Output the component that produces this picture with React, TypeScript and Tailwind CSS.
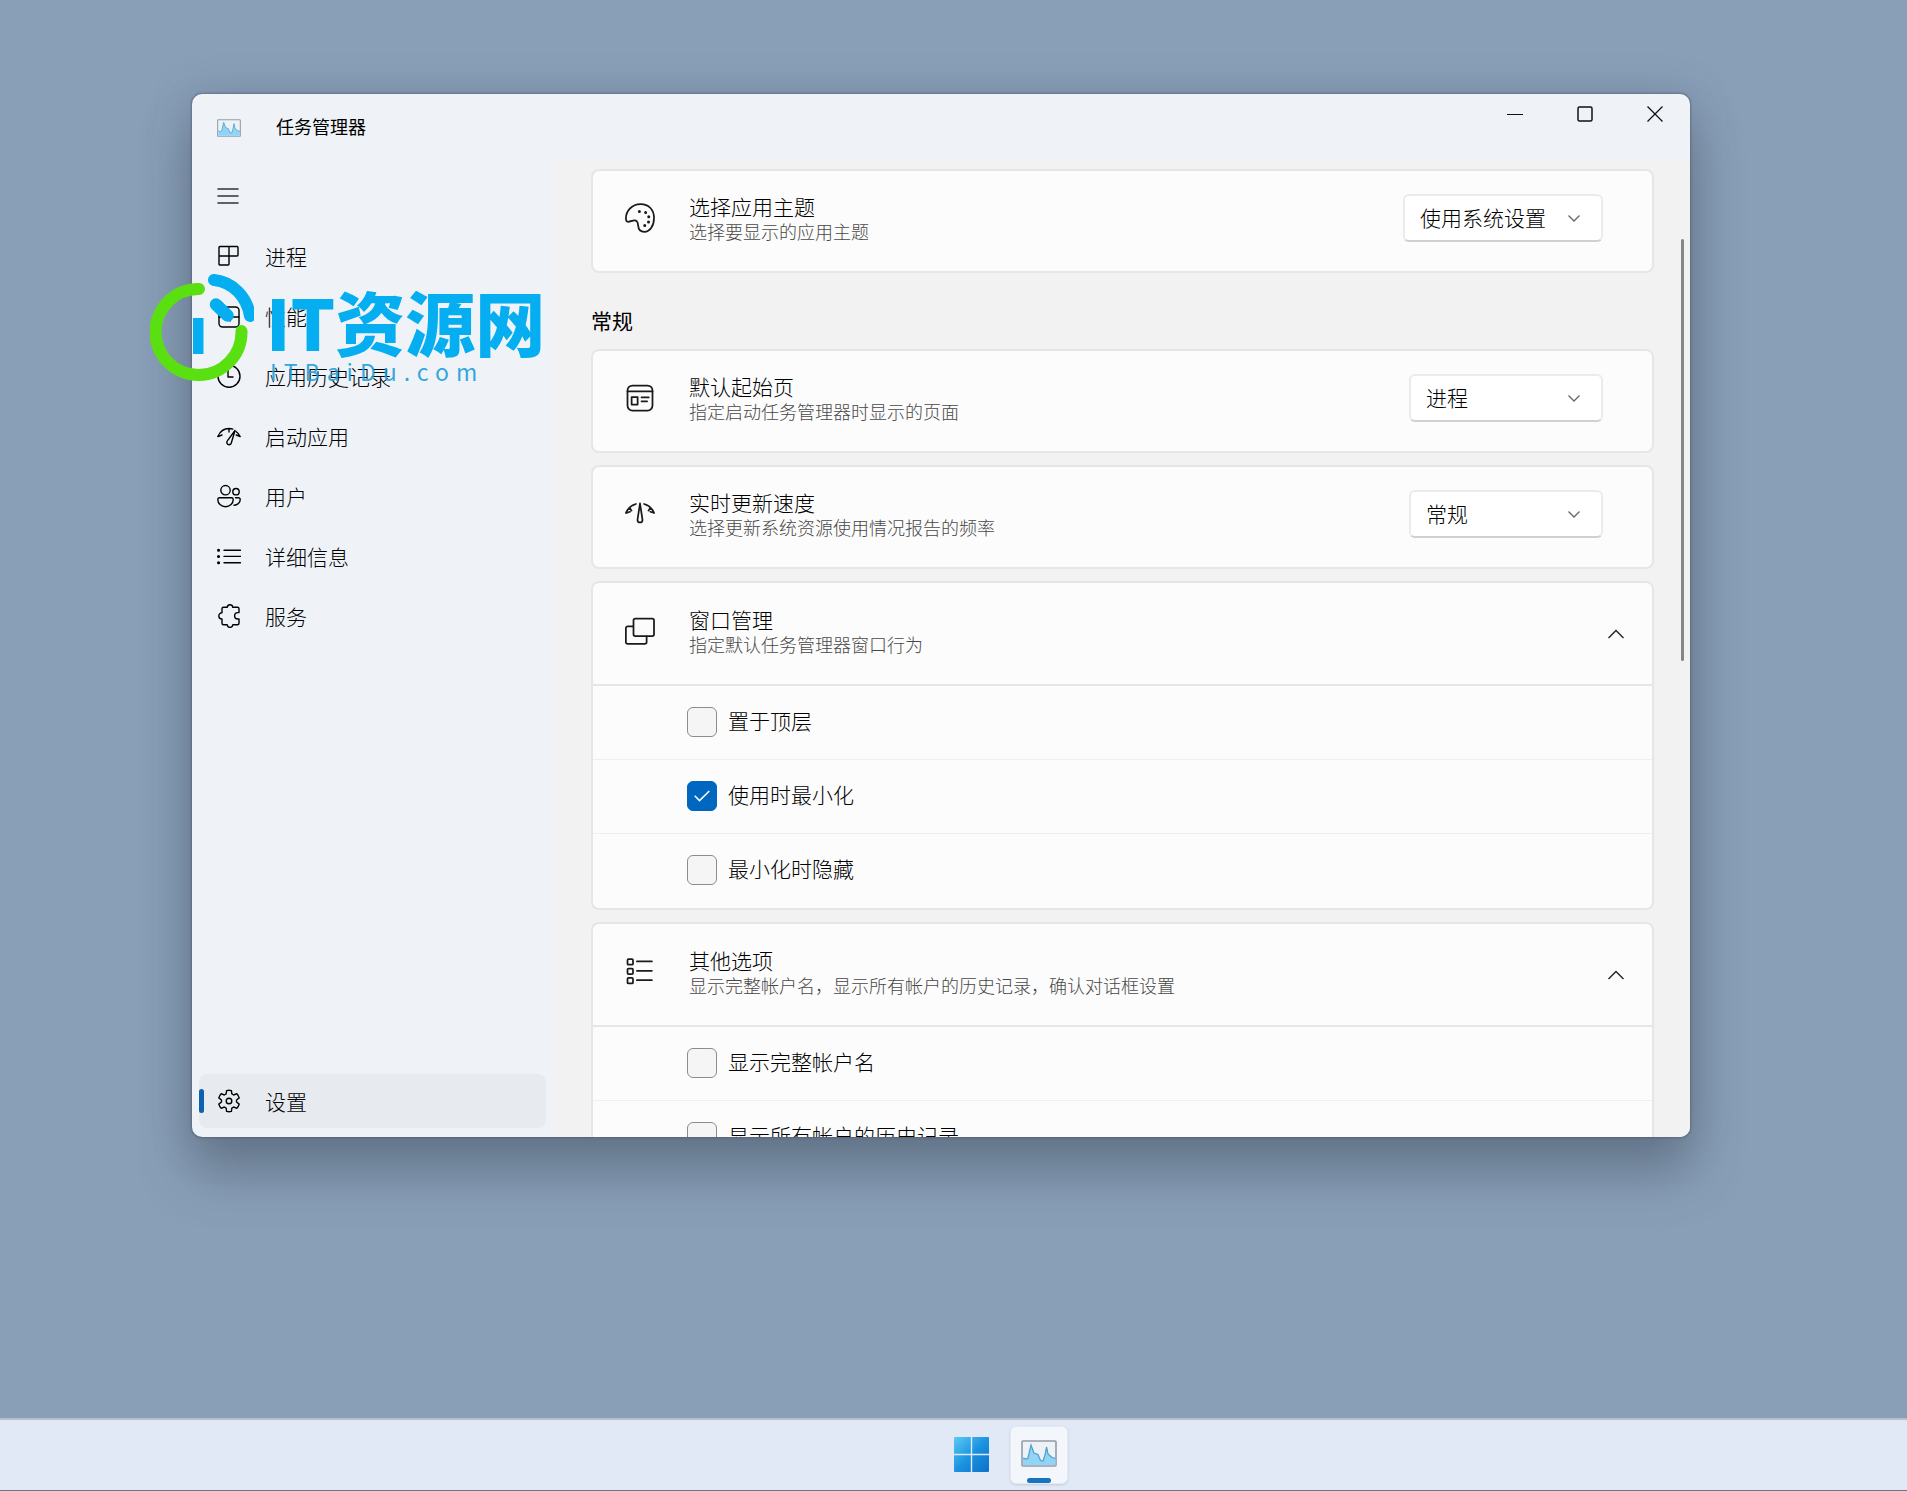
import { ReactNode, useState } from 'react';

interface IconProps {
  children: ReactNode;
  className?: string;
}

function Icon({ children, className = 'w-6 h-6' }: IconProps) {
  return (
    <svg
      viewBox="0 0 24 24"
      fill="none"
      stroke="currentColor"
      strokeWidth="1.4"
      strokeLinecap="round"
      strokeLinejoin="round"
      className={`${className} shrink-0`}
      aria-hidden="true"
    >
      {children}
    </svg>
  );
}

const navItems = [
  {
    label: '进程',
    icon: (
      <Icon>
        <path d="M3 2.500h17a1 1 0 0 1 1 1V11a1 1 0 0 1-1 1h-8v8a1 1 0 0 1-1 1H3a1 1 0 0 1-1-1V3.500a1 1 0 0 1 1-1zM12 2.500V12M2 12h10" />
      </Icon>
    ),
  },
  {
    label: '性能',
    icon: (
      <Icon>
        <rect x="2" y="3" width="20" height="20" rx="3.500" />
        <path d="M2 13h4l3-5 4 9 2.500-4H22" />
      </Icon>
    ),
  },
  {
    label: '应用历史记录',
    icon: (
      <Icon>
        <circle cx="12" cy="12.300" r="11" />
        <path d="M11 6v7h5" />
      </Icon>
    ),
  },
  {
    label: '启动应用',
    icon: (
      <Icon>
        <path d="M.8 12.500C3 7.500 7 4.500 12 4.500c1.400 0 2.700.2 3.800.6M1 12.500l4-1.500M12 4.500v3.500M19 7.500c1.800 1.300 3.200 3 4.200 5l-4-1.500" />
        <path d="M18 6.500l-7.500 10.200a2.300 2.300 0 1 0 3.800 2.300z" />
      </Icon>
    ),
  },
  {
    label: '用户',
    icon: (
      <Icon>
        <circle cx="8.500" cy="6.200" r="4.700" />
        <circle cx="19" cy="7.700" r="3.200" />
        <path d="M2.500 13.700h12a1.700 1.700 0 0 1 1.700 1.700c0 4-3.200 7.300-7.700 7.300S.8 19.400.8 15.400A1.700 1.700 0 0 1 2.500 13.700zM18.500 13.700h3a1.700 1.700 0 0 1 1.700 1.700c0 3.300-2.600 5.800-6.200 5.800" />
      </Icon>
    ),
  },
  {
    label: '详细信息',
    icon: (
      <Icon>
        <path d="M7 6.200h16.500M7 12.400h16.500M7 18.700h16.500" />
        <path d="M1.500 6.200h.1M1.500 12.400h.1M1.500 18.700h.1" strokeWidth="3" />
      </Icon>
    ),
  },
  {
    label: '服务',
    icon: (
      <Icon>
        <path d="M6.500 3.300h3.700c.2-1.500 1.300-2.500 2.800-2.500s2.600 1 2.800 2.500h4.700A1.500 1.500 0 0 1 22 4.800V8.600h-1.200a3.200 3.200 0 0 0 0 6.400H22v4.300a1.500 1.500 0 0 1-1.500 1.500h-4.700c-.2 1.500-1.300 2.600-2.800 2.600s-2.600-1.100-2.800-2.600H6.500A1.500 1.500 0 0 1 5 19.300V15c-1.700 0-3.200-1.300-3.200-3s1.500-3.200 3.200-3.200v-4a1.500 1.500 0 0 1 1.500-1.500z" />
      </Icon>
    ),
  },
];

const paletteIcon = (
  <Icon className="w-[30px] h-[30px]">
    <path d="M.8 13.200C.3 6.500 5.500.9 12.500.9c6.600 0 10.700 4.600 10.700 11 0 6.200-3.200 11.200-7.700 11.200-3 0-4.800-2.200-5-5.200-.2-3.200-1.400-4.600-4.200-3.800-2.600.8-5.200 2-5.500-.9z" />
    <path d="M11.500 6.700h.01M16.500 7.500h.01M19 11h.01M18.800 15.200h.01M15.800 18h.01" strokeWidth="2.400" />
  </Icon>
);

const startPageIcon = (
  <Icon className="w-[30px] h-[30px]">
    <rect x="2" y="2" width="20" height="20" rx="4" />
    <path d="M2 6.700h20M5.300 11.200h4.800v6H5.300zM13.200 11.500h5.800M13.200 14.600h4.500" />
  </Icon>
);

const speedIcon = (
  <Icon className="w-[30px] h-[30px]">
    <path d="M.7 11.200C2.200 7.600 5 5 8.700 4M1 11.200l3-1M3.700 7.200l1.500 2M15.300 4c3.700 1 6.500 3.600 8 7.200l-3-1M20.300 7.200l-1.500 2" />
    <path d="M12 3.500l-2 13.200a2 2 0 1 0 4 0z" />
  </Icon>
);

const windowsIcon = (
  <Icon className="w-[30px] h-[30px]">
    <rect x="6.800" y="2" width="16.400" height="14" rx="1.400" />
    <path d="M6.500 8.200H2.200A1.500 1.500 0 0 0 .7 9.700v11a1.500 1.500 0 0 0 1.500 1.500h13.600a1.500 1.500 0 0 0 1.500-1.500v-4.500" />
  </Icon>
);

const optionsIcon = (
  <Icon className="w-[30px] h-[30px]">
    <rect x="2" y="1.700" width="4.400" height="4.400" rx=".8" />
    <rect x="2" y="9.200" width="4.400" height="4.400" rx=".8" />
    <rect x="2" y="16.700" width="4.400" height="4.400" rx=".8" />
    <path d="M9.500 3.500h12M9.500 11h12M9.500 18.500h12" />
  </Icon>
);

function PerformanceIcon({ className }: { className: string }) {
  return (
    <svg viewBox="0 0 36 27" className={className} aria-hidden="true">
      <rect x="1" y="1" width="34" height="25" rx="1" fill="#eef2f6" stroke="#929da9" strokeWidth="1.600" />
      <path
        d="M2 18l3 1 2-1 3-13 3 8 4 1.500 2.500 6 2.500.5 2-6 1.500-8 1.500 7 4 3.500 3.500 1V25H2z"
        fill="#92d4f5"
      />
      <path
        d="M2 18l3 1 2-1 3-13 3 8 4 1.500 2.500 6 2.500.5 2-6 1.500-8 1.500 7 4 3.500 3.500 1"
        fill="none"
        stroke="#4a9fce"
        strokeWidth="1.200"
      />
    </svg>
  );
}

function Select({ id, options, className }: { id: string; options: string[]; className: string }) {
  return (
    <div className={`grid items-center mb-[6px] ${className}`}>
      <select
        id={id}
        className="col-start-1 row-start-1 w-full h-12 appearance-none rounded-md border-2 border-[#ebebeb] border-b-[#d0d0d0] bg-white pl-[15px] pr-12 text-[21px] font-light text-black"
      >
        {options.map((option) => (
          <option key={option}>{option}</option>
        ))}
      </select>
      <svg
        viewBox="0 0 12 8"
        fill="none"
        stroke="#666"
        strokeWidth="1.300"
        className="col-start-1 row-start-1 justify-self-end mr-[23px] w-3 h-2 pointer-events-none"
      >
        <path d="M.5 1.500L6 7l5.500-5.500" />
      </svg>
    </div>
  );
}

interface CardLabelProps {
  icon: ReactNode;
  title: string;
  description: string;
  htmlFor?: string;
}

function CardLabel({ icon, title, description, htmlFor }: CardLabelProps) {
  return (
    <>
      <span className="pb-[6px] text-[#1a1a1a]">{icon}</span>
      <span className="flex-1 flex flex-col pb-1 ml-[34px] text-left font-light leading-[25px]">
        {htmlFor ? (
          <label htmlFor={htmlFor} className="text-[21px]">{title}</label>
        ) : (
          <span className="text-[21px]">{title}</span>
        )}
        <span className="text-lg leading-[25px] text-[#484848]">{description}</span>
      </span>
    </>
  );
}

interface SettingCardProps extends CardLabelProps {
  children: ReactNode;
}

function SettingCard({ children, ...label }: SettingCardProps) {
  return (
    <div className="flex items-center h-[104px] shrink-0 rounded-lg border-2 border-[#e6e6e6] bg-[#fcfcfc] pl-8 pr-[49px]">
      <CardLabel {...label} />
      {children}
    </div>
  );
}

interface ExpanderProps extends CardLabelProps {
  options: { label: string; checked: boolean }[];
}

function Expander({ options, ...label }: ExpanderProps) {
  const [open, setOpen] = useState(true);

  return (
    <div className="shrink-0 rounded-lg border-2 border-[#e6e6e6] bg-[#fcfcfc]">
      <button
        type="button"
        aria-expanded={open}
        onClick={() => setOpen(!open)}
        className="flex items-center w-full h-[101px] pl-8 pr-7"
      >
        <CardLabel {...label} />
        <svg viewBox="0 0 16 10" fill="none" stroke="#222" strokeWidth="1.400" className="w-4 h-[10px]">
          {open ? <path d="M.5 9L8 1.500 15.500 9" /> : <path d="M.5 1L8 8.500 15.500 1" />}
        </svg>
      </button>
      {open && (
        <div className="border-t-2 border-[#e6e6e6] divide-y divide-[#efefef]">
          {options.map((option) => (
            <label key={option.label} className="flex items-center h-[74px] pb-0.5 pl-[94px] gap-[11px] text-[21px] font-light">
              <span className="grid place-items-center">
                <input
                  type="checkbox"
                  defaultChecked={option.checked}
                  className="peer col-start-1 row-start-1 w-[30px] h-[30px] appearance-none rounded-md border border-[#8c8c8c] bg-[#f5f5f5] checked:border-[#0067c0] checked:bg-[#0067c0]"
                />
                <svg
                  viewBox="0 0 16 12"
                  fill="none"
                  stroke="#fff"
                  strokeWidth="1.500"
                  className="col-start-1 row-start-1 w-4 h-3 hidden peer-checked:block pointer-events-none"
                >
                  <path d="M.7 5.800L5.500 10.600 15.300 1" />
                </svg>
              </span>
              <span className="pb-0.5">{option.label}</span>
            </label>
          ))}
        </div>
      )}
    </div>
  );
}

function TitleBar() {
  return (
    <header className="flex h-[66px] shrink-0 pl-[25px]">
      <div className="flex items-center flex-1 pt-0.5">
        <PerformanceIcon className="w-6 h-[18px]" />
        <h1 className="ml-[35px] pb-1 text-lg leading-6">任务管理器</h1>
      </div>
      <button type="button" aria-label="最小化" className="flex items-center justify-center w-[70px] h-10">
        <svg viewBox="0 0 16 16" stroke="#111" strokeWidth="1.200" className="w-4 h-4">
          <path d="M0 8.500h16" />
        </svg>
      </button>
      <button type="button" aria-label="最大化" className="flex items-center justify-center w-[70px] h-10">
        <svg viewBox="0 0 16 16" fill="none" stroke="#111" strokeWidth="1.500" className="w-4 h-4">
          <rect x="1" y="1" width="14" height="14" rx="1.500" />
        </svg>
      </button>
      <button type="button" aria-label="关闭" className="flex items-center justify-center w-[70px] h-10">
        <svg viewBox="0 0 16 16" stroke="#111" strokeWidth="1.300" className="w-4 h-4">
          <path d="M.5.500l15 15M15.500.500l-15 15" />
        </svg>
      </button>
    </header>
  );
}

function Sidebar() {
  return (
    <nav className="flex flex-col w-[360px] shrink-0 gap-1.5 pt-[9px] pb-[9px] pl-[7px] pr-[6px]">
      <button type="button" aria-label="打开导航" className="flex items-center h-[54px] pl-[18px]">
        <svg viewBox="0 0 22 16" stroke="#333" strokeWidth="1.600" strokeLinecap="round" className="w-[22px] h-4">
          <path d="M1 1h20M1 8h20M1 15h20" />
        </svg>
      </button>
      {navItems.map((item) => (
        <a key={item.label} href="#" className="flex items-center h-[54px] shrink-0 rounded-lg pl-[18px] gap-6 text-[21px] font-light">
          {item.icon}
          <span className="pt-0.5">{item.label}</span>
        </a>
      ))}
      <a
        href="#"
        aria-current="page"
        className="flex items-center h-[54px] shrink-0 mt-auto rounded-lg bg-[#e7ebf0] text-[21px] font-light"
      >
        <span className="w-[5px] h-6 rounded-full bg-[#0d62b0]"></span>
        <span className="ml-[13px] mr-6">
          <Icon>
            <path d="M9.150 4.950L9.600 1.600Q12 1 14.400 1.600L14.850 4.950L16.680 6.010L19.800 4.700Q21.500 6.500 22.200 8.900L19.520 10.940V13.060L22.200 15.100Q21.500 17.500 19.800 19.300L16.680 17.990L14.850 19.050L14.400 22.400Q12 23 9.600 22.400L9.150 19.050L7.320 17.990L4.200 19.300Q2.500 17.500 1.800 15.100L4.480 13.060V10.940L1.800 8.900Q2.500 6.500 4.200 4.700L7.320 6.010z" />
            <circle cx="12" cy="12" r="2.800" />
          </Icon>
        </span>
        <span className="pt-0.5">设置</span>
      </a>
    </nav>
  );
}

function Settings() {
  return (
    <main className="flex flex-1 min-w-0 overflow-hidden bg-[#f2f2f2] pl-[39px]">
      <div className="flex flex-col flex-1 min-w-0 gap-3 pt-[9px]">
        <SettingCard icon={paletteIcon} title="选择应用主题" description="选择要显示的应用主题" htmlFor="theme">
          <Select id="theme" options={['使用系统设置', '浅色', '深色']} className="w-[200px]" />
        </SettingCard>
        <h2 className="mt-[22px] mb-1 text-[21px] leading-[26px] font-normal">常规</h2>
        <SettingCard icon={startPageIcon} title="默认起始页" description="指定启动任务管理器时显示的页面" htmlFor="start-page">
          <Select id="start-page" options={['进程', '性能', '用户']} className="w-[194px]" />
        </SettingCard>
        <SettingCard icon={speedIcon} title="实时更新速度" description="选择更新系统资源使用情况报告的频率" htmlFor="speed">
          <Select id="speed" options={['常规', '高', '低']} className="w-[194px]" />
        </SettingCard>
        <Expander
          icon={windowsIcon}
          title="窗口管理"
          description="指定默认任务管理器窗口行为"
          options={[
            { label: '置于顶层', checked: false },
            { label: '使用时最小化', checked: true },
            { label: '最小化时隐藏', checked: false },
          ]}
        />
        <Expander
          icon={optionsIcon}
          title="其他选项"
          description="显示完整帐户名，显示所有帐户的历史记录，确认对话框设置"
          options={[
            { label: '显示完整帐户名', checked: false },
            { label: '显示所有帐户的历史记录', checked: false },
          ]}
        />
      </div>
      {/* Scroll gutter */}
      <div className="flex justify-end w-9 shrink-0 pt-[79px] pr-[6px]">
        <div className="w-[3px] h-[422px] rounded-full bg-[#868686]"></div>
      </div>
    </main>
  );
}

function Watermark() {
  return (
    <div className="absolute left-[150px] top-[269px] flex gap-3 pointer-events-none">
      <svg viewBox="0 0 104 114" fill="none" strokeLinecap="round" className="w-[104px] h-[114px]">
        <path d="M49 20A43 43 0 1 0 91.500 62" stroke="#5ae010" strokeWidth="12" />
        <path d="M64 11C83 13 97 28 100 47" stroke="#04aef0" strokeWidth="12" />
        <path d="M66 35.500L77.500 46.500" stroke="#04aef0" strokeWidth="12.500" />
        <path d="M43 49h10.500v36H43z" fill="#04aef0" />
      </svg>
      <div className="flex flex-col pt-[14px]">
        <span className="text-[70px] leading-[76px] font-black text-[#04aef0] whitespace-nowrap">IT资源网</span>
        <span className="pl-1 text-[23px] leading-6 tracking-[7px] text-[#1e9fdc] opacity-90">ITBaiDu.com</span>
      </div>
    </div>
  );
}

function Taskbar() {
  return (
    <footer className="flex items-center justify-center gap-[10px] h-[73px] shrink-0 border-t-2 border-b border-t-[#b4bfd0] border-b-[#70767e] bg-[#e1e9f6] pl-[103px]">
      <button type="button" aria-label="开始" className="flex items-center justify-center w-[58px] h-[58px] pb-0.5">
        <svg viewBox="0 0 35 35" className="w-[35px] h-[35px]">
          <defs>
            <linearGradient id="start" x1="0" y1="0" x2="35" y2="35" gradientUnits="userSpaceOnUse">
              <stop offset="0" stopColor="#5ccbf7" />
              <stop offset="0.500" stopColor="#1b93e0" />
              <stop offset="1" stopColor="#0f6fc8" />
            </linearGradient>
          </defs>
          <path
            d="M1 0h15.800v16.800H0V1a1 1 0 0 1 1-1zM18.200 0H34a1 1 0 0 1 1 1v15.800H18.200zM0 18.200h16.800V35H1a1 1 0 0 1-1-1zM18.200 18.200H35V34a1 1 0 0 1-1 1H18.200z"
            fill="url(#start)"
          />
        </svg>
      </button>
      <button
        type="button"
        aria-label="任务管理器"
        className="flex flex-col items-center justify-between w-[58px] h-[58px] rounded-md border border-[#e4eaf2] bg-[#f3f6fb] pt-[13px] shadow-sm"
      >
        <PerformanceIcon className="w-9 h-[27px]" />
        <span className="w-6 h-[5px] rounded-full bg-[#1573bf]"></span>
      </button>
    </footer>
  );
}

export default function App() {
  return (
    <div className="relative flex flex-col h-screen overflow-hidden bg-[#899fb8] font-['Noto_Sans_CJK_SC',sans-serif] text-black">
      <div className="flex flex-1 min-h-0 pt-[94px] pr-[217px] pb-[281px] pl-[192px]">
        <div className="flex flex-col flex-1 min-w-0 overflow-hidden rounded-[10px] bg-[#eff3f8] shadow-[0_0_2px_1px_rgba(70,75,85,0.45),0_4px_44px_rgba(75,85,110,0.3),0_36px_52px_rgba(60,75,85,0.42)]">
          <TitleBar />
          <div className="flex flex-1 min-h-0">
            <Sidebar />
            <Settings />
          </div>
        </div>
      </div>
      <Taskbar />
      <Watermark />
    </div>
  );
}
